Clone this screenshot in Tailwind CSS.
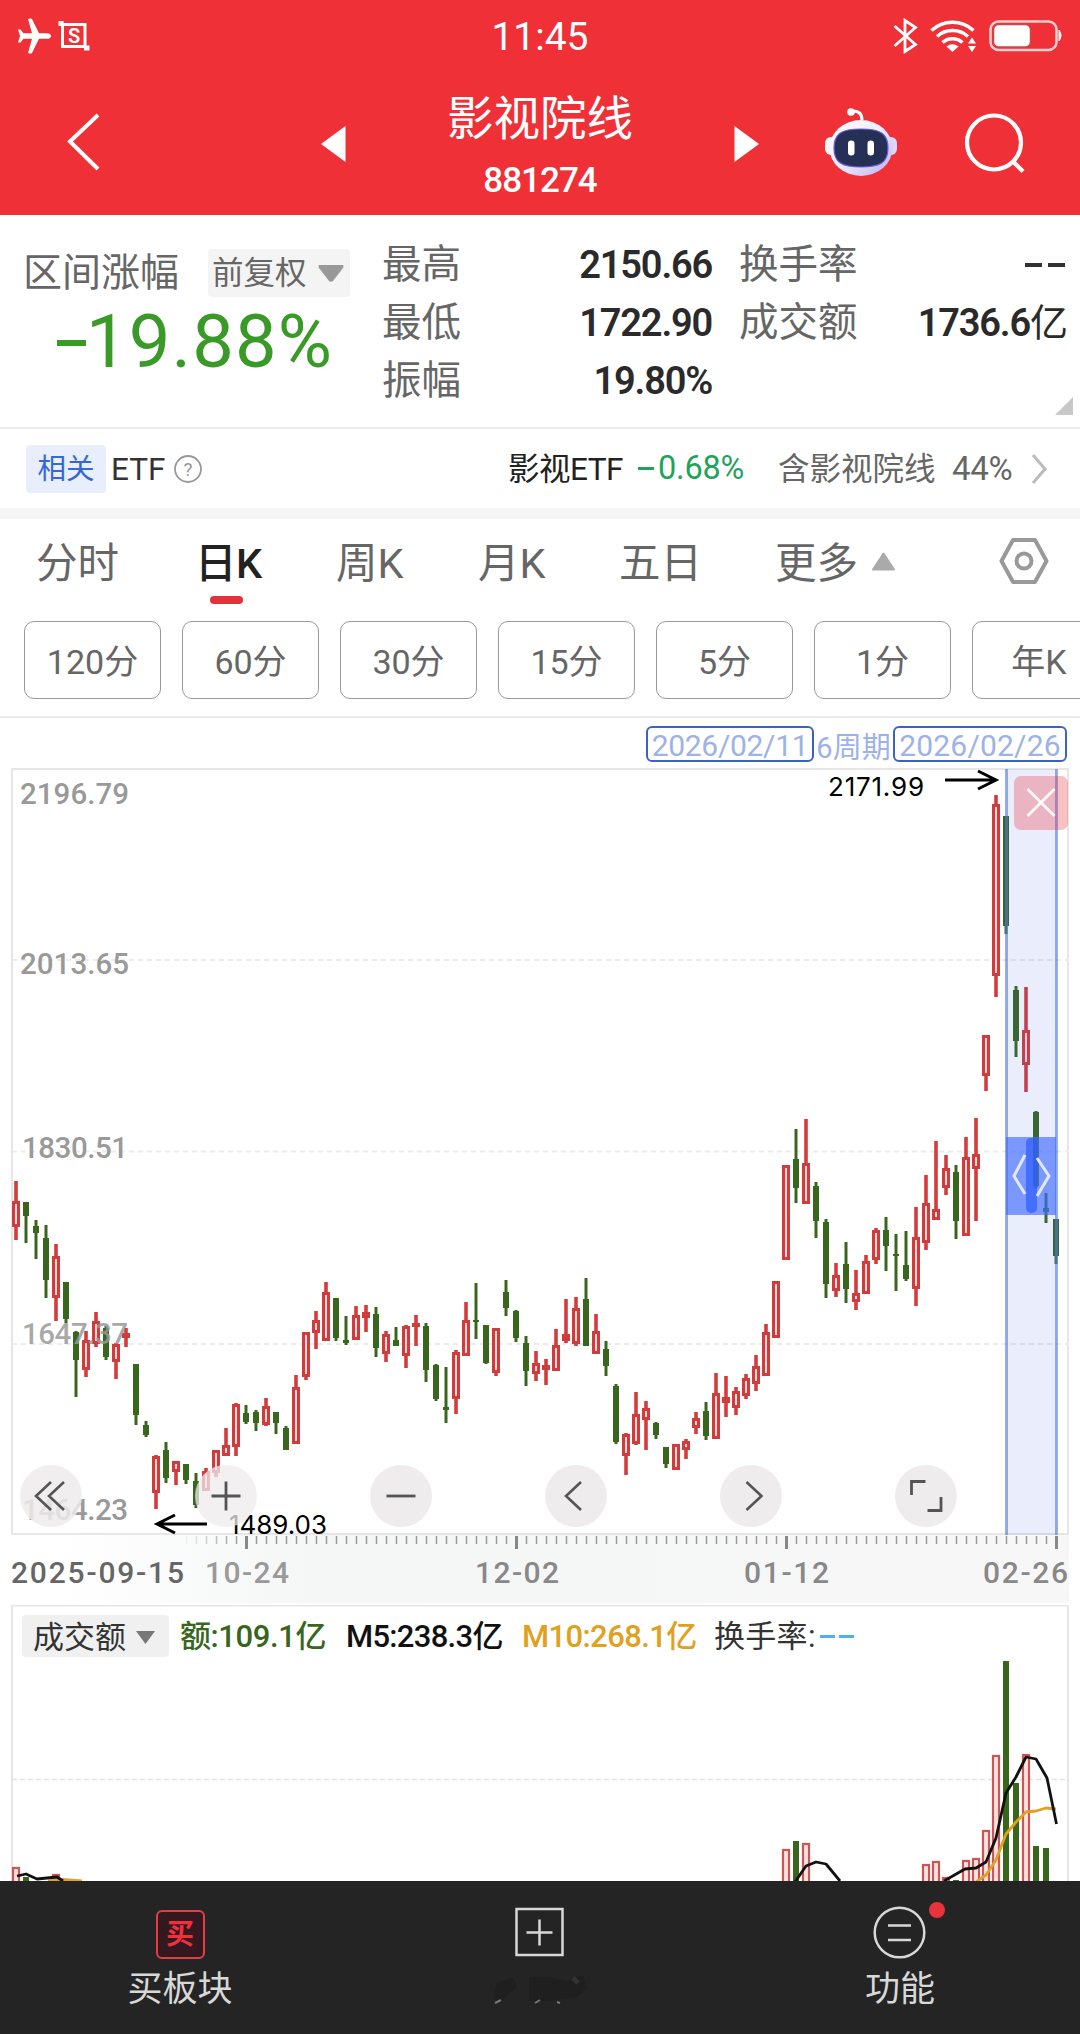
<!DOCTYPE html>
<html lang="zh-CN">
<head>
    <meta charset="UTF-8">
    <meta name="viewport" content="width=device-width, initial-scale=1.0">
    <title>影视院线 881274</title>
    <script src="https://cdn.jsdelivr.net/npm/@tailwindcss/browser@4"></script>
</head>
<body class="bg-white">

<div class="w-[1080px] h-[2034px] overflow-hidden flex flex-col bg-white text-[#666] font-['Roboto','Noto_Sans_CJK_SC',sans-serif] leading-none whitespace-nowrap">

    <!-- Status bar -->
    <div class="h-[72px] shrink-0 bg-[#f03037] grid grid-cols-3 items-center text-white pl-[17px] pr-[17px]">
        <div class="flex items-center gap-[6px]">
            <svg width="35" height="36" viewBox="0 0 35 36" fill="#fff"><path d="M34 18c0-2-2-2.800-4-2.800h-8L15 1q-1-1-4 0l4 14.200H6.500L3.500 11.500H1L3 18 1 24.500h2.500l3-3.700H15L11 35q3 1 4 0l7-14.200h8c2 0 4-.8 4-2.800z"/></svg>
            <svg width="32" height="34" viewBox="0 0 32 34" fill="none" stroke="#fff" stroke-width="3"><path d="M3 5.500h24v22H4.500V4"/><path d="M.5 4.500h5M26 29h5.500" stroke-width="5"/><text x="16" y="23.500" font-size="20" font-weight="600" text-anchor="middle" fill="#fff" stroke="none">S</text></svg>
        </div>
        <div class="text-center text-[39px] pt-[3px]">11:45</div>
        <div class="flex items-center justify-end">
            <svg width="25" height="36" viewBox="0 0 25 36" fill="none" stroke="#fff" stroke-width="2.800"><path d="M1.500 8L22.500 26.500 12 33.500V2.500L22.500 9.500 1.500 28"/></svg>
            <svg class="ml-[12px]" width="47" height="34" viewBox="0 0 47 34" fill="none" stroke="#fff" stroke-width="3.600"><path d="M1.500 11.500a31 31 0 0 1 42 0M7 17.500a23 23 0 0 1 31 0M12.500 23.500a15 15 0 0 1 20 0"/><path d="M22.500 33l-6-5.500q6-4.500 12 0z" fill="#fff" stroke="none"/><path d="M42 18.500l4 6h-8zM42 33l4-6h-8z" fill="#fff" stroke="none"/></svg>
            <svg class="ml-[12px]" width="74" height="32" viewBox="0 0 74 32"><rect x="1.500" y="1.500" width="66" height="28.500" rx="8" fill="none" stroke="#ffd0d0" stroke-width="2.500"/><rect x="4.500" y="4.500" width="37" height="22.500" rx="5" fill="#fff" stroke="#c9474b" stroke-width="1.500"/><path d="M70 10q4 5.500 0 11z" fill="#fff" stroke="#fff"/></svg>
        </div>
    </div>

    <!-- Title bar -->
    <div class="h-[143px] shrink-0 bg-[#f03037] flex text-white">
        <svg class="ml-[66px] mt-[40px]" width="36" height="60" viewBox="0 0 36 60" fill="none" stroke="#fff" stroke-width="4"><path d="M32 3L4 29.500 32 57"/></svg>
        <svg class="ml-[219px] mt-[54px]" width="25" height="36" viewBox="0 0 25 36" fill="#fff"><path d="M24.500 0v36L0 18z"/></svg>
        <div class="w-[388px] flex flex-col items-center">
            <div class="text-[46.500px] mt-[24px]">影视院线</div>
            <div class="text-[35px] font-medium tracking-[-1px] mt-[20px]">881274</div>
        </div>
        <svg class="mt-[54px]" width="25" height="36" viewBox="0 0 25 36" fill="#fff"><path d="M.500 0v36L25 18z"/></svg>
        <svg class="ml-[65px] mt-[34px]" width="74" height="70" viewBox="0 0 74 70">
            <defs><linearGradient id="shell" x1="0" y1="0" x2="1" y2="1"><stop offset="0" stop-color="#fff"/><stop offset=".5" stop-color="#f0ebfb"/><stop offset="1" stop-color="#b9aef2"/></linearGradient></defs>
            <path d="M27 5q11-1 11 9" fill="none" stroke="#fff" stroke-width="3"/><circle cx="27" cy="6" r="3.800" fill="#fff"/>
            <rect x="1" y="31" width="12" height="18" rx="6" fill="#f6f3fd"/><rect x="61" y="31" width="12" height="18" rx="6" fill="#ddd6fa"/>
            <ellipse cx="37" cy="42" rx="31.500" ry="28" fill="url(#shell)"/>
            <path d="M37 23c20 0 27 5 27 19s-7 19-27 19-27-5-27-19 7-19 27-19z" fill="#262f55" stroke="#6a5fd8" stroke-width="1.200"/>
            <rect x="24" y="34.500" width="6.500" height="15" rx="3.200" fill="#fff"/><rect x="43.500" y="34.500" width="6.500" height="15" rx="3.200" fill="#fff"/>
        </svg>
        <svg class="ml-[66px] mt-[41px]" width="64" height="64" viewBox="0 0 64 64" fill="none" stroke="#fff" stroke-width="4.200"><circle cx="30" cy="29.500" r="27"/><path d="M48.500 48l10.500 10.500"/></svg>
    </div>

    <!-- Range stats -->
    <div class="h-[214px] shrink-0 border-b-2 border-[#ebebeb] flex relative">
        <div class="w-[382px] pl-[23px] pt-[34px]">
            <div class="flex items-center">
                <div class="text-[39px] w-[185px]">区间涨幅</div>
                <div class="w-[142px] h-[48px] bg-[#f5f4f4] rounded flex items-center pl-[4px] gap-[11px]">
                    <span class="text-[31.500px] pt-[2px]">前复权</span>
                    <svg width="26" height="17" viewBox="0 0 26 17"><path d="M1 0h24q1 1 0 3L15 16q-2 1.500-4 0L1 3Q0 1 1 0" fill="#999"/></svg>
                </div>
            </div>
            <div class="text-[74px] text-[#3a9a28] tracking-[1.200px] mt-[8px] pl-[34px] flex items-center"><span class="w-[29px] h-[6px] bg-[#3a9a28] mt-[2px]"></span>19.88%</div>
        </div>
        <div class="w-[330px] pt-[21px] text-[39.500px]">
            <div class="h-[58px] flex items-center justify-between">最高<b class="text-[#2a2a2a] text-[38px] font-semibold tracking-[-1.200px]">2150.66</b></div>
            <div class="h-[58px] flex items-center justify-between">最低<b class="text-[#2a2a2a] text-[38px] font-semibold tracking-[-1.200px]">1722.90</b></div>
            <div class="h-[58px] flex items-center justify-between">振幅<b class="text-[#2a2a2a] text-[38px] font-semibold tracking-[-1.200px]">19.80%</b></div>
        </div>
        <div class="w-[329px] ml-[27px] pt-[21px] text-[39.500px]">
            <div class="h-[58px] flex items-center justify-between">换手率<span class="flex gap-[6px] pr-[3px]"><i class="w-[17px] h-[4px] bg-[#333]"></i><i class="w-[17px] h-[4px] bg-[#333]"></i></span></div>
            <div class="h-[58px] flex items-center justify-between">成交额<span class="text-[#2a2a2a] flex items-center"><b class="text-[38px] font-semibold tracking-[-1.200px]">1736.6</b><span class="text-[38px]">亿</span></span></div>
        </div>
        <svg class="absolute right-[7px] bottom-[12px]" width="18" height="18"><path d="M18 0v18H0z" fill="#c8c8c8"/></svg>
    </div>

    <!-- Related ETF -->
    <div class="h-[79px] shrink-0 flex items-center pl-[26px] pr-[32px] text-[31.500px]">
        <div class="w-[80px] h-[48px] rounded bg-[#e9eefc] text-[#3567d6] text-[28.500px] flex items-center justify-center pt-[3px]">相关</div>
        <span class="text-[#333] ml-[5px] pt-[3px]">ETF</span>
        <svg class="ml-[8px]" width="30" height="30" viewBox="0 0 30 30"><circle cx="15" cy="15" r="13" fill="none" stroke="#999" stroke-width="1.800"/><text x="15" y="22" font-size="19" text-anchor="middle" fill="#999">?</text></svg>
        <div class="ml-auto flex items-center">
            <span class="text-[#222] w-[130px] pt-[3px] tracking-[-0.500px]">影视ETF</span>
            <span class="text-[#1fa35a] w-[140px] flex items-center text-[32.500px] tracking-[-0.200px]"><i class="w-[16px] h-[3px] bg-[#1fa35a] mr-[4px]"></i>0.68%</span>
            <span class="w-[174px] pt-[3px]">含影视院线</span>
            <span class="w-[79px] text-[33px] tracking-[-0.300px]">44%</span>
            <svg width="17" height="32" viewBox="0 0 17 32" fill="none" stroke="#bbb" stroke-width="3"><path d="M2 2l12 14L2 30"/></svg>
        </div>
    </div>
    <div class="h-[11px] shrink-0 bg-[#f5f5f5]"></div>

    <!-- Period tabs -->
    <div class="h-[102px] shrink-0 flex pt-[24px] pl-[36px] text-[41.500px] relative">
        <div class="w-[159px] h-[44px]">分时</div>
        <div class="w-[141px] text-[#222] font-medium tracking-[-0.500px]">日K<div class="w-[33px] h-[8px] rounded-full bg-[#e0343a] mt-[11px] ml-[15px]"></div></div>
        <div class="w-[142px]">周K</div>
        <div class="w-[141px]">月K</div>
        <div class="w-[156px]">五日</div>
        <div class="w-[96px]">更多</div>
        <svg class="mt-[9px]" width="25" height="19"><path d="M12.500 1.500L23 17.500H2z" fill="#aaa" stroke="#aaa" stroke-width="2" stroke-linejoin="round"/></svg>
        <svg class="ml-[103px] mt-[-6px]" width="50" height="48" viewBox="0 0 50 48" fill="none" stroke="#999" stroke-width="4"><path d="M14 3h22l11.500 21L36 45H14L2.500 24z" stroke-linejoin="round"/><circle cx="25" cy="24" r="7.500"/></svg>
    </div>
    <div class="h-[97px] shrink-0 border-b-2 border-[#ebebeb] flex gap-[21px] pl-[24px] text-[34px]">
        <div class="w-[137px] h-[78px] shrink-0 border-[1.500px] border-[#999] rounded-[10px] flex items-center justify-center pt-1">120分</div>
        <div class="w-[137px] h-[78px] shrink-0 border-[1.500px] border-[#999] rounded-[10px] flex items-center justify-center pt-1">60分</div>
        <div class="w-[137px] h-[78px] shrink-0 border-[1.500px] border-[#999] rounded-[10px] flex items-center justify-center pt-1">30分</div>
        <div class="w-[137px] h-[78px] shrink-0 border-[1.500px] border-[#999] rounded-[10px] flex items-center justify-center pt-1">15分</div>
        <div class="w-[137px] h-[78px] shrink-0 border-[1.500px] border-[#999] rounded-[10px] flex items-center justify-center pt-1">5分</div>
        <div class="w-[137px] h-[78px] shrink-0 border-[1.500px] border-[#999] rounded-[10px] flex items-center justify-center pt-1">1分</div>
        <div class="w-[137px] h-[78px] shrink-0 border-[1.500px] border-[#999] rounded-[10px] flex items-center justify-center pt-1 pr-[3px]">年K</div>
    </div>

    <!-- Selected range -->
    <div class="h-[50px] shrink-0 flex justify-end pt-[8px] pr-[13px] text-[#9db2e6] text-[30px]">
        <div class="w-[168px] h-[36px] border-2 border-[#3a63c4] rounded-[6px] flex items-center justify-center pt-[4px] tracking-[-0.300px]">2026/02/11</div>
        <div class="w-[79px] flex items-center justify-center pt-[3px] text-[29px]">6周期</div>
        <div class="w-[174px] h-[36px] border-2 border-[#3a63c4] rounded-[6px] flex items-center justify-center pt-[4px] tracking-[0.200px]">2026/02/26</div>
    </div>

    <!-- K line chart -->
    <div class="h-[837px] shrink-0 relative">
        <svg width="1080" height="837" viewBox="0 768 1080 837">
            <defs>
                <linearGradient id="fadeX"><stop offset="0" stop-color="#f5f6f6" stop-opacity="0"/><stop offset=".25" stop-color="#f5f6f6"/><stop offset="1" stop-color="#f7f7f7"/></linearGradient>
                <linearGradient id="fadeTick" gradientUnits="userSpaceOnUse" x1="180" y1="0" x2="240" y2="0"><stop offset="0" stop-color="#999" stop-opacity="0"/><stop offset="1" stop-color="#999"/></linearGradient>
            </defs>
            <rect x="60" y="1535" width="1009" height="68" fill="url(#fadeX)"/>
            <g fill="none" stroke="#e6e6e6" stroke-width="2">
                <rect x="12" y="769" width="1056" height="765"/>
                <path d="M12 960h1057M12 1151.500h1057M12 1344h1057" stroke-dasharray="5 4" stroke="#ececec"/>
            </g>
            <g id="candles"></g>
            <g font-size="29.500" font-weight="500" fill="#999">
                <text x="20" y="804" textLength="109">2196.79</text>
                <text x="20" y="974" textLength="109">2013.65</text>
                <text x="22" y="1158" textLength="106">1830.51</text>
                <text x="22" y="1343.500" textLength="106" fill-opacity=".85">1647.37</text>
                <text x="22" y="1520" textLength="106">1464.23</text>
            </g>
            <g class="font-['Inter']" font-size="26" fill="#000">
                <text x="828" y="796" textLength="96">2171.99</text>
                <text x="229" y="1534" textLength="98">1489.03</text>
            </g>
            <g fill="none" stroke="#000" stroke-width="3">
                <path d="M945 780h50M978 771l18 9-18 9"/>
                <path d="M207 1524h-50M175 1515l-18 9 18 9"/>
            </g>
            <path id="ticks" fill="none" stroke="url(#fadeTick)" stroke-width="1.500"/>
            <path d="M246.500 1536v13M516.500 1536v13M786.500 1536v13M1056.500 1536v13" stroke="#888" stroke-width="3"/>
            <g font-size="30" font-weight="500" fill="#888">
                <text x="11" y="1583" textLength="173" fill="#666">2025-09-15</text>
                <text x="205" y="1583" textLength="84" fill="#999">10-24</text>
                <text x="475" y="1583" textLength="84">12-02</text>
                <text x="744" y="1583" textLength="85">01-12</text>
                <text x="983" y="1583" textLength="85">02-26</text>
            </g>
            <!-- range overlay -->
            <rect x="1006" y="769" width="51" height="766" fill="#4a68e8" fill-opacity=".12"/>
            <path d="M1006.500 769v766M1056.500 769v766" stroke="#5078dc" stroke-opacity=".6" stroke-width="3"/>
            <rect x="1006" y="1137" width="50" height="78" fill="#3f6cff" fill-opacity=".66"/>
            <rect x="1026" y="1138" width="11" height="75" rx="5" fill="#2f5cff" fill-opacity=".7"/>
            <path d="M1025 1155l-11 21 11 18M1037 1158l12 18-12 20" fill="none" stroke="#dfe9ff" stroke-width="3"/>
            <rect x="1014" y="776" width="54" height="54" rx="7" fill="#f0323a" fill-opacity=".3"/>
            <path d="M1027.500 789l27 27M1054.500 789l-27 27" stroke="#fff" stroke-opacity=".9" stroke-width="3"/>
        </svg>

        <!-- chart controls, over the candles -->
        <div class="absolute left-[19.500px] top-[697px] flex gap-[113px]">
            <div class="w-[62px] h-[62px] rounded-full bg-[#edebec]/85 flex items-center justify-center"><svg width="62" height="62" fill="none" stroke="#555" stroke-width="2.600"><path d="M31 17L16 31l15 14M44 17L29 31l15 14"/></svg></div>
            <div class="w-[62px] h-[62px] rounded-full bg-[#edebec]/75 flex items-center justify-center"><svg width="62" height="62" fill="none" stroke="#555" stroke-width="2.800"><path d="M31 16.500v29M16.500 31h29"/></svg></div>
            <div class="w-[62px] h-[62px] rounded-full bg-[#efecee] flex items-center justify-center"><svg width="62" height="62" fill="none" stroke="#555" stroke-width="2.800"><path d="M16.500 31h29"/></svg></div>
            <div class="w-[62px] h-[62px] rounded-full bg-[#efecee] flex items-center justify-center"><svg width="62" height="62" fill="none" stroke="#555" stroke-width="2.600"><path d="M36 17L21 31l15 14"/></svg></div>
            <div class="w-[62px] h-[62px] rounded-full bg-[#efecee] flex items-center justify-center"><svg width="62" height="62" fill="none" stroke="#555" stroke-width="2.600"><path d="M26.500 17l15 14-15 14"/></svg></div>
            <div class="w-[62px] h-[62px] rounded-full bg-[#efecee] flex items-center justify-center"><svg width="62" height="62" fill="none" stroke="#555" stroke-width="2.800"><path d="M16.500 30V16.500h14M32.500 45.500H46V32"/></svg></div>
        </div>
    </div>

    <!-- Turnover -->
    <div class="h-[276px] shrink-0 relative">
        <svg class="absolute inset-0" width="1080" height="276" viewBox="0 1605 1080 276">
            <path d="M12 1881V1605.500h1056V1881" fill="none" stroke="#e6e6e6" stroke-width="2"/>
            <path d="M12 1779.500h1057" stroke="#e2e2e2" stroke-width="1.500" stroke-dasharray="5 3"/>
            <g id="volumes"></g>
            <g fill="none" stroke-width="2.800" stroke-linejoin="round">
                <path stroke="#e0a020" d="M48 1881l14-1.500 20 1.500M976 1882l10-7 10-15 10-26 10-12 10-10 10-1 10-3 10 1"/>
                <path stroke="#111" d="M17 1876l9-2 11 5 20-2 6 4M795 1882l11-16 10-4 10 2 14 17M944 1881l21-12 11-1 10-6 10-24 10-45 10-16 10-20 10 2 11 19 9.500 46"/>
            </g>
        </svg>
        <div class="relative flex items-center h-[42px] mt-[10px] pl-[22px] text-[31px] text-[#333]">
            <div class="w-[147px] h-[42px] bg-[#f0f0f0] rounded flex items-center pl-[11px] pt-[2px] gap-[10px]">成交额<svg width="19" height="13"><path d="M0 0h19L9.500 13z" fill="#777"/></svg></div>
            <span class="w-[166px] pl-[11px] text-[#38661c] font-medium tracking-[-0.400px]">额:109.1亿</span>
            <span class="w-[176px] pl-[11px] text-[#111] font-medium tracking-[-0.700px]">M5:238.3亿</span>
            <span class="w-[193px] pl-[11px] text-[#e0a020] font-medium tracking-[-0.600px]">M10:268.1亿</span>
            <span class="pl-[10px] tracking-[0.300px]">换手率:</span>
            <span class="flex gap-[4px] pl-[4px]"><i class="w-[15px] h-[3px] bg-[#4db2ee]"></i><i class="w-[15px] h-[3px] bg-[#4db2ee]"></i></span>
        </div>
    </div>

    <!-- Bottom bar -->
    <div class="h-[153px] shrink-0 bg-[#242424] grid grid-cols-3 text-[#d8d8d8] text-[35px]">
        <div class="flex flex-col items-center pt-[29px]">
            <div class="w-[49px] h-[49px] rounded-[6px] border-[2.500px] border-[#e04045] bg-[#33191f] text-[#f0303c] text-[28px] font-bold flex items-center justify-center">买</div>
            <div class="mt-[13px]">买板块</div>
        </div>
        <div class="flex flex-col items-center pt-[26px]">
            <svg width="50" height="50" fill="none" stroke="#d8d8d8" stroke-width="2.500"><path d="M1.500 2h46v46h-46zM24.500 12.500v26M11.500 25.500h26"/></svg>
            <svg class="mt-[12px]" width="110" height="40" fill="#1f1f1f"><path d="M12 14l16-6 4 10-16 14-8-2zM44 8h18l22 4 14-6 4 14-10 8-30 4H44z"/><path d="M10 34l6-3M50 34l5-3M72 33l3 1" stroke="#777" stroke-width="2"/><path d="M88 9l5 5" stroke="#333" stroke-width="5"/></svg>
        </div>
        <div class="flex flex-col items-center pt-[25px] relative">
            <svg width="54" height="54" fill="none" stroke="#d8d8d8" stroke-width="2.500"><circle cx="26.500" cy="26.500" r="24.800"/><path d="M15 19.500h23M15 34h23"/></svg>
            <div class="absolute left-[209px] top-[21px] w-[16px] h-[16px] rounded-full bg-[#e8333a]"></div>
            <div class="mt-[12px]">功能</div>
        </div>
    </div>
</div>

<script>
    // [type, high, body top, body bottom, low], one entry per trading day
    const days = [
        ['r',1181,1201,1227,1240],['g',1202,1202,1216,1243],['g',1220,1226,1233,1259],['g',1225,1238,1280,1298],['r',1244,1256,1298,1321],
        ['g',1282,1282,1319,1323],['g',1331,1332,1360,1397],['r',1331,1340,1370,1377],['r',1312,1321,1344,1347],['g',1326,1328,1357,1360],
        ['r',1343,1344,1362,1379],['r',1328,1333,1338,1347],['g',1364,1364,1415,1425],['g',1421,1425,1435,1437],['r',1455,1456,1493,1509],
        ['g',1442,1450,1478,1483],['r',1461,1461,1472,1485],['g',1464,1464,1480,1484],['g',1473,1481,1505,1508],['r',1468,1471,1491,1491],
        ['r',1450,1450,1473,1477],['r',1428,1445,1456,1456],['r',1403,1404,1447,1456],['g',1405,1413,1422,1424],['g',1410,1412,1423,1431],
        ['r',1398,1406,1425,1426],['g',1412,1412,1423,1434],['g',1426,1428,1450,1450],['r',1375,1387,1444,1444],['r',1332,1332,1377,1380],
        ['r',1311,1320,1333,1349],['r',1282,1292,1341,1341],['g',1298,1298,1338,1341],['g',1316,1340,1343,1345],['r',1306,1315,1340,1340],
        ['r',1305,1312,1318,1332],['g',1307,1314,1348,1357],['r',1331,1334,1354,1362],['g',1327,1340,1346,1346],['r',1325,1326,1356,1368],
        ['r',1315,1323,1327,1346],['g',1323,1326,1370,1382],['g',1364,1365,1399,1401],['g',1367,1407,1410,1423],['r',1350,1352,1399,1414],
        ['r',1302,1320,1356,1356],['g',1283,1320,1322,1339],['g',1325,1325,1363,1364],['r',1328,1328,1373,1376],['g',1280,1292,1308,1316],
        ['g',1310,1311,1338,1342],['g',1336,1343,1371,1386],['r',1351,1363,1374,1381],['r',1359,1365,1370,1385],['r',1329,1345,1371,1371],
        ['r',1299,1334,1341,1343],['r',1297,1308,1344,1346],['g',1278,1299,1346,1346],['r',1314,1331,1354,1354],['g',1341,1349,1366,1376],
        ['g',1384,1386,1442,1444],['r',1433,1434,1456,1475],['r',1392,1414,1444,1445],['r',1401,1408,1420,1450],['g',1422,1423,1435,1439],
        ['g',1447,1447,1464,1468],['r',1444,1444,1470,1470],['r',1439,1441,1450,1459],['r',1412,1418,1428,1434],['g',1402,1411,1436,1440],
        ['r',1373,1393,1439,1439],['r',1376,1397,1403,1417],['r',1387,1391,1408,1415],['r',1374,1378,1396,1399],['r',1355,1366,1384,1391],
        ['r',1324,1332,1376,1376],['r',1281,1281,1338,1338],['r',1165,1165,1260,1260],['g',1129,1159,1188,1203],['r',1119,1163,1204,1204],
        ['g',1182,1186,1221,1238],['g',1219,1222,1284,1298],['r',1263,1275,1291,1297],['g',1242,1264,1289,1303],['r',1270,1293,1302,1310],
        ['r',1255,1261,1294,1294],['r',1228,1230,1260,1264],['g',1217,1230,1246,1271],['g',1234,1254,1256,1291],['g',1231,1265,1279,1281],
        ['r',1207,1237,1289,1306],['r',1175,1203,1243,1250],['r',1141,1209,1220,1220],['r',1155,1168,1188,1195],['g',1165,1172,1221,1239],
        ['r',1137,1157,1236,1236],['r',1118,1154,1169,1221],['r',1035,1035,1076,1091],['r',795,804,976,997],['g',816,816,926,934],
        ['g',986,990,1041,1057],['r',987,1030,1065,1092],['g',1111,1112,1186,1188],['g',1193,1208,1212,1223],['g',1219,1219,1256,1264]
    ];

    document.getElementById('candles').innerHTML = days.map(([type, high, top, bottom, low], i) => {
        const x = 16 + i * 10;
        if (type === 'g') {
            return `<path d="M${x} ${high}V${low}" stroke="#38661c" stroke-width="3"/>
                <rect x="${x - 3}" y="${top}" width="6" height="${bottom - top}" fill="#38661c"/>`;
        }
        const body = bottom - top;
        const hollow = body > 7 ? `<rect x="${x - 1}" y="${top + 3}" width="2" height="${body - 6}" fill="#ffd9d9"/>` : '';
        return `<path d="M${x} ${high}V${low}" stroke="#d63a3a" stroke-width="3.6"/>
            <rect x="${x - 4}" y="${top}" width="8" height="${body}" fill="#d03c3c"/>${hollow}`;
    }).join('');

    // [type, x, top]
    const volumes = [
        ['r',16,1867],['g',26,1877],['r',56,1874],['r',786,1849],['g',796,1841],['r',806,1843],['r',926,1864],['r',936,1861],
        ['r',946,1877],['g',956,1880],['r',966,1860],['r',976,1858],['r',986,1830],['r',996,1755],['g',1006,1661],['g',1016,1783],
        ['r',1026,1754],['g',1036,1846],['g',1046,1848]
    ];
    document.getElementById('volumes').innerHTML = volumes.map(([type, x, top]) => type === 'g'
        ? `<rect x="${x - 3}" y="${top}" width="6" height="${1885 - top}" fill="#38661c"/>`
        : `<rect x="${x - 3}" y="${top + 1}" width="6" height="${1885 - top}" fill="#fde4e4" stroke="#cf5555" stroke-width="2.2"/>`
    ).join('');

    let ticks = '';
    for (let x = 186.5; x < 1057; x += 10) ticks += `M${x} 1536v8`;
    document.getElementById('ticks').setAttribute('d', ticks);
</script>

</body>
</html>
